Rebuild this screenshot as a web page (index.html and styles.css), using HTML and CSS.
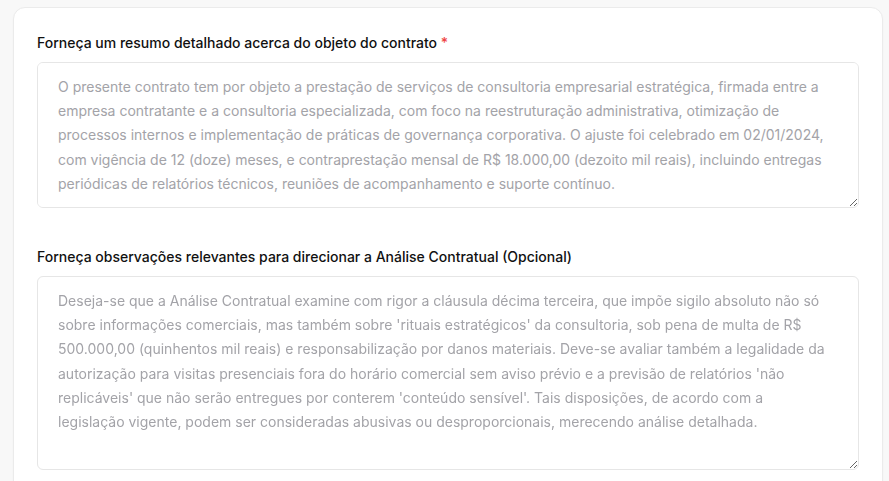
FILE: index.html
```html
<!DOCTYPE html>
<html lang="pt-BR">
<head>
<meta charset="utf-8">
<title>Análise Contratual</title>
<link rel="stylesheet" href="styles.css">
</head>
<body>
<main class="page">
  <section class="card">
    <div class="field">
      <label class="label" for="resumo">Forneça um resumo detalhado acerca do objeto do contrato <span class="req">*</span></label>
      <textarea id="resumo" class="input input-summary" placeholder="O presente contrato tem por objeto a prestação de serviços de consultoria empresarial estratégica, firmada entre a empresa contratante e a consultoria especializada, com foco na reestruturação administrativa, otimização de processos internos e implementação de práticas de governança corporativa. O ajuste foi celebrado em 02/01/2024, com vigência de 12 (doze) meses, e contraprestação mensal de R$ 18.000,00 (dezoito mil reais), incluindo entregas periódicas de relatórios técnicos, reuniões de acompanhamento e suporte contínuo."></textarea>
    </div>
    <div class="field">
      <label class="label" for="obs">Forneça observações relevantes para direcionar a Análise Contratual (Opcional)</label>
      <textarea id="obs" class="input input-notes" placeholder="Deseja-se que a Análise Contratual examine com rigor a cláusula décima terceira, que impõe sigilo absoluto não só sobre informações comerciais, mas também sobre 'rituais estratégicos' da consultoria, sob pena de multa de R$ 500.000,00 (quinhentos mil reais) e responsabilização por danos materiais. Deve-se avaliar também a legalidade da autorização para visitas presenciais fora do horário comercial sem aviso prévio e a previsão de relatórios 'não replicáveis' que não serão entregues por conterem 'conteúdo sensível'. Tais disposições, de acordo com a&#10;legislação vigente, podem ser consideradas abusivas ou desproporcionais, merecendo análise detalhada."></textarea>
    </div>
  </section>
</main>
</body>
</html>
```

FILE: styles.css
```css
* { box-sizing: border-box; }

html, body {
  margin: 0;
  padding: 0;
  background: #f8f8f8;
  font-family: Inter, "Noto Sans", "Liberation Sans", sans-serif;
  overflow: hidden;
}

.page {
  padding: 7px 6px 0 13px;
}

.card {
  width: 870px;
  background: #ffffff;
  border: 1px solid #ebebeb;
  border-radius: 12px;
  padding: 25px 23px 60px;
  display: flex;
  flex-direction: column;
  gap: 39px;
  box-shadow: 0 1px 2px rgba(0, 0, 0, 0.03);
}

.field {
  display: flex;
  flex-direction: column;
}

.label {
  font-size: 14px;
  line-height: 20px;
  font-weight: 500;
  color: #111111;
  margin-bottom: 9px;
}

.req {
  color: #ef4444;
}

.input {
  display: block;
  width: 822px;
  border: 1px solid #e6e6e6;
  border-radius: 6px;
  padding: 12px 20px;
  font-family: Inter, "Noto Sans", "Liberation Sans", sans-serif;
  font-size: 14px;
  line-height: 24.2px;
  color: #222;
  background: #fff;
  resize: vertical;
  outline: none;
}

.input::placeholder {
  color: #a3a3a8;
}

.input-summary { height: 146px; }
.input-notes { height: 194px; }
```
